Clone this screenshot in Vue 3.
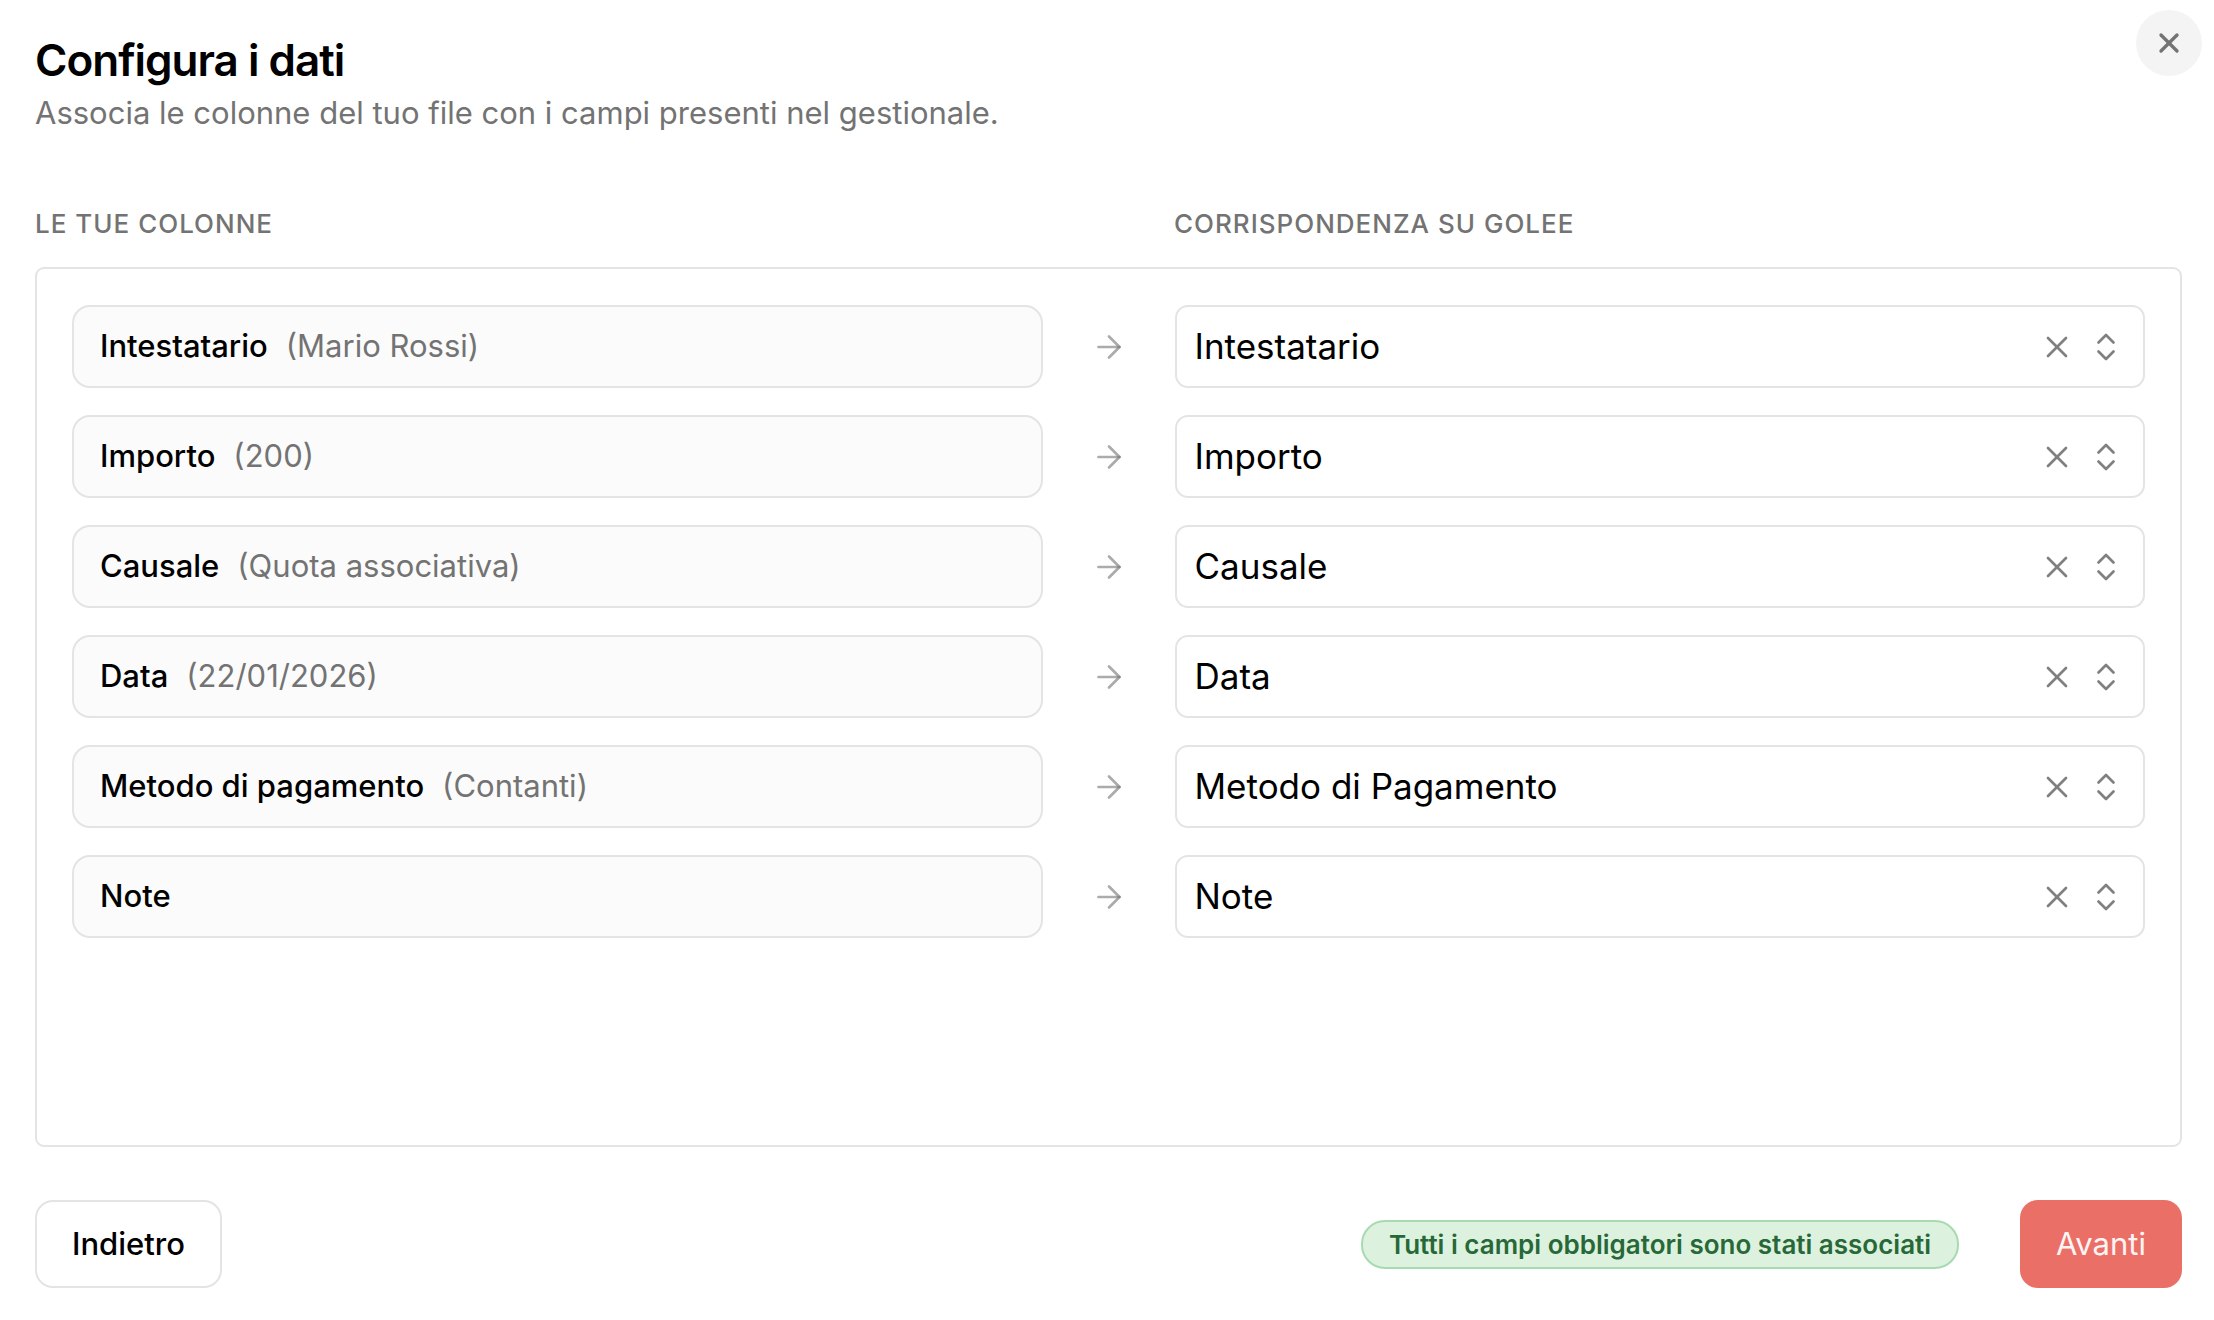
<script setup>
import { ref } from 'vue'

const fields = ['Intestatario', 'Importo', 'Causale', 'Data', 'Metodo di Pagamento', 'Note']

const rows = ref([
  { column: 'Intestatario', sample: 'Mario Rossi', target: 'Intestatario' },
  { column: 'Importo', sample: '200', target: 'Importo' },
  { column: 'Causale', sample: 'Quota associativa', target: 'Causale' },
  { column: 'Data', sample: '22/01/2026', target: 'Data' },
  { column: 'Metodo di pagamento', sample: 'Contanti', target: 'Metodo di Pagamento' },
  { column: 'Note', sample: '', target: 'Note' }
])
</script>

<template>
  <main class="dialog">
    <button class="close" type="button" aria-label="Chiudi">
      <svg viewBox="0 0 24 24" aria-hidden="true"><path d="M18 6 6 18" /><path d="m6 6 12 12" /></svg>
    </button>

    <header class="head">
      <h1>Configura i dati</h1>
      <p>Associa le colonne del tuo file con i campi presenti nel gestionale.</p>
    </header>

    <div class="captions">
      <h2>Le tue colonne</h2>
      <h2>Corrispondenza su Golee</h2>
    </div>

    <section class="panel">
      <div v-for="(row, i) in rows" :key="row.column" class="row">
        <label class="source" :for="`target-${i}`">
          <span class="name">{{ row.column }}</span>
          <span v-if="row.sample" class="sample">({{ row.sample }})</span>
        </label>
        <svg class="arrow" viewBox="0 0 24 24" aria-hidden="true"><path d="M5 12h14" /><path d="m12 5 7 7-7 7" /></svg>
        <div class="target">
          <select :id="`target-${i}`" v-model="row.target">
            <option v-for="field in fields" :key="field">{{ field }}</option>
          </select>
          <button class="clear" type="button" aria-label="Rimuovi" @click="row.target = ''">
            <svg viewBox="0 0 24 24" aria-hidden="true"><path d="M18 6 6 18" /><path d="m6 6 12 12" /></svg>
          </button>
          <svg class="chevrons" viewBox="0 0 24 24" aria-hidden="true"><path d="m7 15 5 5 5-5" /><path d="m7 9 5-5 5 5" /></svg>
        </div>
      </div>
    </section>

    <footer class="foot">
      <button class="btn back" type="button">Indietro</button>
      <div class="next-group">
        <span class="badge">Tutti i campi obbligatori sono stati associati</span>
        <button class="btn next" type="button">Avanti</button>
      </div>
    </footer>
  </main>
</template>

<style>
body {
  margin: 0;
  background: #fff;
}
</style>

<style scoped>
.dialog,
.dialog * {
  box-sizing: border-box;
}

.dialog {
  position: relative;
  display: flex;
  flex-direction: column;
  min-height: 100vh;
  padding: 37px 32px 32px 35px;
  font-family: Inter, 'Liberation Sans', sans-serif;
  color: #000;
}

button,
select {
  font-family: inherit;
  cursor: pointer;
}

svg {
  display: block;
  flex: none;
  width: 36px;
  height: 36px;
  fill: none;
  stroke: #808080;
  stroke-width: 1.8;
  stroke-linecap: round;
  stroke-linejoin: round;
}

.close {
  position: absolute;
  top: 10px;
  right: 12px;
  display: grid;
  place-items: center;
  width: 66px;
  height: 66px;
  padding: 0;
  border: 0;
  border-radius: 50%;
  background: #f4f4f4;
}

.close svg {
  width: 32px;
  height: 32px;
  stroke: #737373;
  stroke-width: 2.5;
}

.head {
  display: flex;
  flex-direction: column;
  gap: 7px;
}

h1,
h2,
p {
  margin: 0;
}

h1 {
  font-size: 44px;
  line-height: 46px;
  font-weight: 600;
  letter-spacing: -1px;
}

p {
  font-size: 31px;
  line-height: 46px;
  color: #737373;
}

.captions {
  display: grid;
  grid-template-columns: 1fr 1fr;
  column-gap: 132px;
  margin-top: 70px;
  padding-right: 37px;
}

.captions h2:last-child {
  margin-left: 18px;
}

h2 {
  font-size: 26px;
  line-height: 36px;
  font-weight: 500;
  letter-spacing: 1px;
  text-transform: uppercase;
  color: #737373;
}

.panel {
  display: flex;
  flex: 1;
  flex-direction: column;
  gap: 27px;
  margin-top: 25px;
  padding: 36px 35px;
  border: 2px solid #e4e4e4;
  border-radius: 9px;
}

.row {
  display: grid;
  grid-template-columns: 1fr 132px 1fr;
  align-items: center;
}

.source {
  display: flex;
  align-items: center;
  gap: 18px;
  height: 83px;
  padding: 0 26px 2px;
  border: 2px solid #e4e4e4;
  border-radius: 18px;
  background: #fbfbfb;
  font-size: 31px;
}

.name {
  font-weight: 500;
}

.sample {
  color: #737373;
}

.arrow {
  justify-self: center;
  stroke: rgba(115, 115, 115, 0.6);
}

.target {
  display: flex;
  align-items: center;
  height: 83px;
  padding-right: 19px;
  border: 2px solid #e4e4e4;
  border-radius: 13px;
}

select {
  flex: 1;
  min-width: 0;
  height: 100%;
  padding: 0 18px 2px;
  border: 0;
  outline: 0;
  appearance: none;
  background: transparent;
  font-size: 35px;
  color: #000;
}

.clear {
  margin-right: 13px;
  padding: 0;
  border: 0;
  background: none;
}

.foot {
  display: flex;
  align-items: center;
  justify-content: space-between;
  margin-top: 53px;
}

.next-group {
  display: flex;
  align-items: center;
  gap: 61px;
}

.badge {
  padding: 1px 26px 0;
  border: 2px solid #a8dab0;
  border-radius: 24px;
  background: #dcf2df;
  font-size: 26px;
  line-height: 44px;
  font-weight: 600;
  color: #286838;
}

.btn {
  height: 88px;
  padding: 0 36px 2px;
  border-radius: 18px;
  font-size: 31px;
}

.back {
  padding: 0 35px 2px;
  border: 2px solid #e4e4e4;
  background: #fff;
  font-weight: 500;
  color: #000;
}

.next {
  border: 0;
  background: #ea6f67;
  color: #fff4f4;
}
</style>
